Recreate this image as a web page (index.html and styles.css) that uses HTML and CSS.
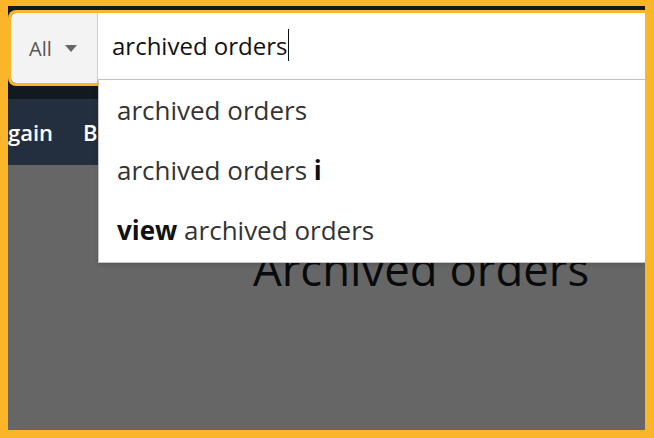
FILE: index.html
```html
<!DOCTYPE html>
<html lang="en">
<head>
  <meta charset="UTF-8" />
  <title>Archived orders</title>
  <link rel="stylesheet" href="styles.css">
</head>
<body>

  <div class="marco">
    <header class="nav-belt">
      <div class="buscador">
        <div class="buscador-depto">
          <span>All</span>
          <span class="flecha"></span>
        </div>
        <div class="buscador-campo">
          <span class="texto-busqueda">archived orders</span><span class="cursor"></span>

          <!-- sugerencias -->
          <ul class="sugerencias">
            <li>archived orders</li>
            <li>archived orders <b>i</b></li>
            <li><b>view</b> archived orders</li>
          </ul>
        </div>
      </div>
    </header>

    <nav class="nav-main">
      <span>gain</span>
      <span>Browsing History</span>
    </nav>

    <main class="contenido">
      <h1>Archived orders</h1>
    </main>
  </div>

</body>
</html>
```

FILE: styles.css
```css
body {
  margin: 0;
  background-color: #fbb52b;
  font-family: 'Open Sans', 'Noto Sans', sans-serif;
  overflow: hidden;
}

.marco {
  margin: 6px 9px 0 8px;
  height: 424px;
  display: flex;
  flex-direction: column;
  overflow: hidden;
}

.nav-belt {
  background-color: #131921;
  height: 93px;
  padding: 7px 0 0 3px;
  box-sizing: border-box;
}

.buscador {
  display: flex;
  height: 70px;
  border-radius: 5px 0 0 5px;
  box-shadow: 0 0 0 3px #fbb52b;
}

.buscador-depto {
  width: 87px;
  background-color: #f3f3f3;
  border-right: 1px solid #cdcdcd;
  border-radius: 5px 0 0 5px;
  display: flex;
  align-items: center;
  gap: 13px;
  padding-left: 18px;
  box-sizing: border-box;
  color: #555;
  font-size: 20px;
}

.flecha {
  width: 0;
  height: 0;
  border-left: 6px solid transparent;
  border-right: 6px solid transparent;
  border-top: 7px solid #666;
}

.buscador-campo {
  flex: 1;
  position: relative;
  background-color: #fff;
  display: flex;
  align-items: center;
  padding: 0 0 6px 14px;
  color: #111;
  font-size: 24px;
}

.cursor {
  display: inline-block;
  width: 1px;
  height: 32px;
  margin-left: 1px;
  background-color: #111;
}

.sugerencias {
  position: absolute;
  top: 66px;
  left: 0;
  right: 0;
  margin: 0;
  padding: 0 0 2px 0;
  list-style: none;
  background-color: #fff;
  border: 1px solid #c4c4c4;
  border-right: none;
  box-shadow: 0 2px 4px rgba(0,0,0,0.15);
  z-index: 10;
}

.sugerencias li {
  height: 60px;
  line-height: 60px;
  padding-left: 18px;
  font-size: 26px;
  color: #333;
}

.sugerencias b {
  color: #111;
  font-weight: 700;
}

.nav-main {
  background-color: #232f3e;
  height: 66px;
  display: flex;
  align-items: center;
  gap: 30px;
  color: #fff;
  font-size: 22px;
  font-weight: 600;
  white-space: nowrap;
  overflow: hidden;
}

.contenido {
  flex: 1;
  background-color: #666;
  padding: 81px 0 0 245px;
}

.contenido h1 {
  margin: 0;
  font-size: 45.5px;
  font-weight: 400;
  line-height: 1;
  color: #080a0b;
  white-space: nowrap;
}
```
